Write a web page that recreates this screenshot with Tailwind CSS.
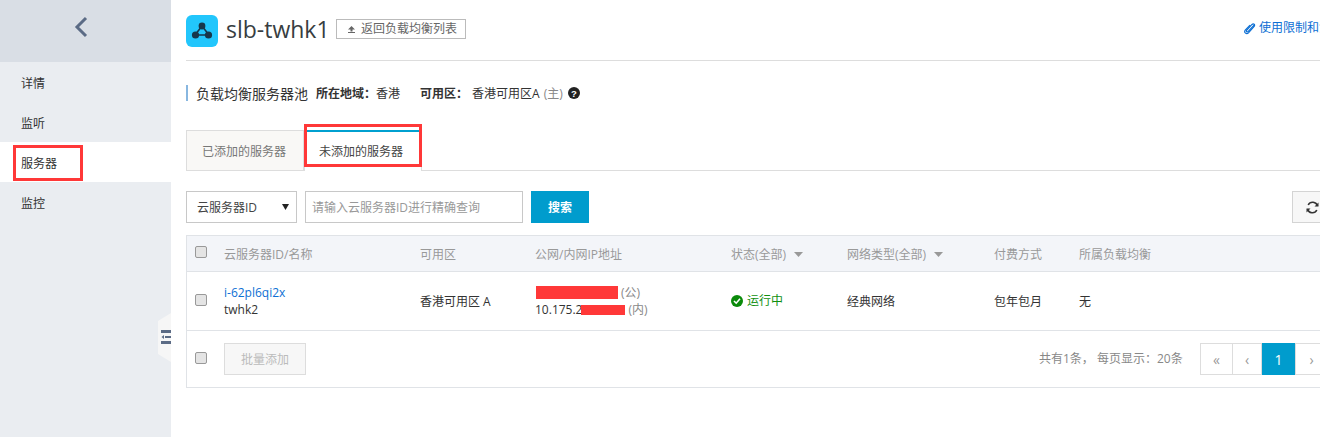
<!DOCTYPE html>
<html>
<head>
<meta charset="utf-8">
<script src="https://cdn.jsdelivr.net/npm/@tailwindcss/browser@4"></script>
</head>
<body class="m-0 bg-white">
<div class="relative flex h-[437px] w-[1320px] overflow-hidden bg-white font-['Open_Sans','Noto_Sans_CJK_SC',sans-serif] text-[12px] text-[#333]">
  <aside class="relative h-full w-[171px] shrink-0 bg-[#eaedf1]">
    <div class="flex h-[62px] items-start justify-center bg-[#d9dee5] pt-[16px]">
      <svg width="16" height="22" viewBox="0 0 16 22" class="ml-[-10px]"><path d="M13 2 L4 11 L13 20" fill="none" stroke="#5b6b85" stroke-width="3"/></svg>
    </div>
    <div class="flex h-10 items-center pl-[21px] pt-[3px]">详情</div>
    <div class="flex h-10 items-center pl-[21px] pt-[3px]">监听</div>
    <div class="flex h-10 items-center bg-white pl-[21px] pt-[3px]">服务器</div>
    <div class="flex h-10 items-center pl-[21px] pt-[3px]">监控</div>
    <svg class="absolute left-[158px] top-[313px]" width="13" height="49" viewBox="0 0 13 49">
      <path d="M13 0 L0 8 L0 41 L13 49 Z" fill="#f6f6f6"/>
      <rect x="3" y="17" width="10" height="3" fill="#5b6b85"/>
      <rect x="7" y="23" width="6" height="2" fill="#5b6b85"/>
      <path d="M6 22 L3.5 24 L6 26 Z" fill="#5b6b85"/>
      <rect x="3" y="28" width="10" height="3" fill="#5b6b85"/>
    </svg>
  </aside>

  <main class="min-w-0 flex-1 pl-[15px]">
    <header class="flex h-[61px] w-[1200px] items-start border-b border-[#dddddd] pt-[15px]">
      <div class="flex h-8 w-8 shrink-0 items-center justify-center rounded-[6px] bg-[#22c6fc]">
        <svg width="22" height="18" viewBox="0 0 22 18"><path d="M11 4 L4 13 H18 Z" fill="none" stroke="#17364a" stroke-width="1.6"/><circle cx="11" cy="4" r="3.4" fill="#17364a"/><circle cx="4.5" cy="13" r="3.6" fill="#17364a"/><circle cx="17.5" cy="13" r="3.6" fill="#17364a"/></svg>
      </div>
      <h1 class="ml-2 w-[102px] shrink-0 whitespace-nowrap text-[23px] leading-[28px] font-normal text-[#373d41]">slb-twhk1</h1>
      <button class="ml-[8px] mt-[4px] flex h-5 w-[130px] shrink-0 items-center whitespace-nowrap border border-[#bbbbbb] pl-[10px] text-[12px] text-[#666]">
        <svg width="9" height="9" viewBox="0 0 9 9" class="mr-[5px] shrink-0"><path d="M4.5 1 L8 4.5 H1 Z M3.5 4.5 H5.5 V6.5 H3.5 Z M1 7 H8 V8 H1 Z" fill="#666"/></svg>
        返回负载均衡列表
      </button>
      <a class="ml-[777px] mt-[5px] flex h-4 w-[100px] shrink-0 items-center whitespace-nowrap text-[#0d6fd4]">
        <svg width="13" height="13" viewBox="0 0 13 13" class="mr-[3px] shrink-0"><path d="M11 3 L5 9.5 C4 10.5 2.8 9.5 3.6 8.4 L9 2.5 C10.5 1 12.6 2.8 11.2 4.4 L5.5 10.8 C3.5 12.8 0.5 10.4 2.2 8.2 L7 3" fill="none" stroke="#0d6fd4" stroke-width="1.1"/></svg>
        使用限制和注意事项
      </a>
    </header>

    <div class="mt-[24px] flex h-4 items-center">
      <span class="h-4 w-[2px] shrink-0 bg-[#88b7e0]"></span>
      <span class="ml-2 w-[112px] pt-[2px] text-[14px] leading-4 text-[#333]">负载均衡服务器池</span>
      <span class="ml-2 pt-[2px] font-semibold text-[#333]">所在地域：</span><span class="pt-[2px]">香港</span>
      <span class="ml-[20px] pt-[2px] font-semibold">可用区：</span>
      <span class="ml-[4px] pt-[2px]">香港可用区A</span><span class="ml-1 pt-[2px] text-[#888]">(主)</span>
      <svg width="12" height="12" viewBox="0 0 12 12" class="ml-[5px]"><circle cx="6" cy="6" r="6" fill="#222"/><text x="6" y="9.5" font-size="9.5" font-weight="700" text-anchor="middle" fill="#fff" font-family="Liberation Sans">?</text></svg>
    </div>

    <div class="mt-[30px] flex h-10 w-[1200px] items-end border-b border-[#dddddd]">
      <div class="flex h-10 w-[118px] items-center justify-center border border-b-0 border-[#dddddd] bg-[#f9f8f6] pr-[2px] pt-[2px] text-[#777]">已添加的服务器</div>
      <div class="mb-[-1px] flex h-[41px] w-[118px] items-center justify-center border-x border-[#dddddd] border-t-2 border-t-[#00a0d0] bg-white pr-[4px] text-[#444]">未添加的服务器</div>
    </div>

    <div class="mt-5 flex h-8 w-[1200px] items-stretch">
      <div class="flex w-[111px] shrink-0 items-center justify-between border border-[#c8c8c8] pl-[10px] pr-[7px]">
        <span class="pt-[2px] text-[#444]">云服务器ID</span>
        <svg width="7" height="6" viewBox="0 0 7 6"><path d="M0 0 H7 L3.5 6 Z" fill="#222"/></svg>
      </div>
      <div class="ml-2 flex w-[218px] shrink-0 items-center border border-[#c8c8c8] pl-[6px] pt-[2px] text-[#999]">请输入云服务器ID进行精确查询</div>
      <button class="ml-2 w-[58px] shrink-0 bg-[#009ccd] pt-[2px] font-bold text-white">搜索</button>
      <div class="ml-[703px] flex w-[40px] shrink-0 items-center border border-[#d4d4d4] bg-[#f7f7f7] pl-[13px]">
        <svg width="13" height="13" viewBox="0 0 13 13"><path d="M11.5 5 A5 5 0 0 0 2.2 4 M1.5 8 A5 5 0 0 0 10.8 9" fill="none" stroke="#333" stroke-width="1.6"/><path d="M12.5 1.5 V5.5 H8.5 Z M0.5 11.5 V7.5 H4.5 Z" fill="#333"/></svg>
      </div>
    </div>

    <section class="mt-3 w-[1200px] border border-[#e0e3e7] border-r-0">
      <div class="grid h-[36px] grid-cols-[37px_196px_115px_196px_116px_147px_85px_1fr] items-center border-b border-[#e0e3e7] bg-[#f3f5f9] pt-[2px] text-[#999]">
        <div class="pl-[8px]"><span class="mt-[-6px] block h-3 w-3 rounded-[2px] border border-[#999] bg-[#e4e4e4]"></span></div>
        <div>云服务器ID/名称</div>
        <div>可用区</div>
        <div>公网/内网IP地址</div>
        <div class="flex items-center">状态(全部)<svg width="9" height="5" viewBox="0 0 9 5" class="ml-[8px]"><path d="M0 0 H9 L4.5 5 Z" fill="#999"/></svg></div>
        <div class="flex items-center">网络类型(全部)<svg width="9" height="5" viewBox="0 0 9 5" class="ml-[8px]"><path d="M0 0 H9 L4.5 5 Z" fill="#999"/></svg></div>
        <div>付费方式</div>
        <div>所属负载均衡</div>
      </div>
      <div class="grid h-[59px] grid-cols-[37px_196px_115px_196px_116px_147px_85px_1fr] items-center border-b border-[#e0e3e7] text-[#333]">
        <div class="pl-[8px]"><span class="mt-[-3px] block h-3 w-3 rounded-[2px] border border-[#999] bg-[#e4e4e4]"></span></div>
        <div class="leading-[17px]"><div class="text-[#0d6fd4]">i-62pl6qi2x</div><div>twhk2</div></div>
        <div class="pt-[2px]">香港可用区 A</div>
        <div class="leading-[17px]">
          <div class="flex items-center"><span class="ml-[1px] h-[13px] w-[82px] bg-[#ff3838]"></span><span class="ml-[3px] text-[#888]">(公)</span></div>
          <div class="flex items-center">10.175.2<span class="ml-[-1px] h-[10px] w-[44px] bg-[#ff3838]"></span><span class="ml-[3px] text-[#888]">(内)</span></div>
        </div>
        <div class="flex items-center text-[#109010]"><svg width="12" height="12" viewBox="0 0 12 12" class="mr-1"><circle cx="6" cy="6" r="6" fill="#0a8a0a"/><path d="M3 6 L5.2 8.2 L9 3.8" fill="none" stroke="#fff" stroke-width="1.6"/></svg>运行中</div>
        <div class="pt-[2px]">经典网络</div>
        <div class="pt-[2px]">包年包月</div>
        <div class="pt-[2px]">无</div>
      </div>
      <div class="flex h-[56px] items-center">
        <span class="ml-[8px] mt-[-3px] block h-3 w-3 shrink-0 rounded-[2px] border border-[#999] bg-[#e4e4e4]"></span>
        <button class="ml-[17px] h-8 w-[82px] shrink-0 border border-[#dddddd] bg-[#f7f7f7] pt-[2px] text-[#bbb]">批量添加</button>
        <span class="ml-[733px] w-[161px] shrink-0 whitespace-nowrap text-[#888]">共有1条， 每页显示：20条</span>
        <div class="flex h-8 shrink-0 text-[14px] text-[#999]">
          <span class="flex w-[33px] items-center justify-center border border-[#dddddd]">«</span>
          <span class="ml-[-1px] flex w-[30px] items-center justify-center border border-[#dddddd]">‹</span>
          <span class="flex w-[33px] items-center justify-center bg-[#009ccd] text-white">1</span>
          <span class="flex w-[33px] items-center justify-center border border-[#dddddd]">›</span>
        </div>
      </div>
    </section>
  </main>

  <div class="absolute left-[13px] top-[145px] h-[36px] w-[70px] border-[3px] border-[#ff3838]"></div>
  <div class="absolute left-[304px] top-[124px] h-[43px] w-[118px] border-[3px] border-[#ff3838]"></div>
</div>
</body>
</html>
